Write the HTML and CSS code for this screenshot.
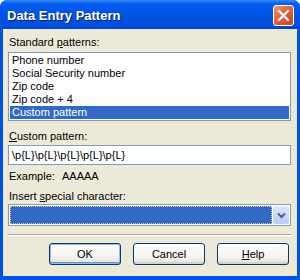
FILE: index.html
```html
<!DOCTYPE html>
<html lang="en">
<head>
    <meta charset="UTF-8">
    <title>Data Entry Pattern</title>
    <link rel="stylesheet" href="styles.css">
</head>
<body>
    <div class="window">
        <div class="titlebar">
            <span class="title">Data Entry Pattern</span>
            <button class="close" type="button">
                <svg width="13" height="13" viewBox="0 0 13 13">
                    <path d="M2 2 L11 11 M11 2 L2 11" stroke="#fff" stroke-width="2.2" stroke-linecap="square"/>
                </svg>
            </button>
        </div>
        <div class="content">
            <p class="label">Standard <u>p</u>atterns:</p>
            <ul class="list">
                <li>Phone number</li>
                <li>Social Security number</li>
                <li>Zip code</li>
                <li>Zip code + 4</li>
                <li class="selected">Custom pattern</li>
            </ul>

            <p class="label gap"><u>C</u>ustom pattern:</p>
            <div class="textbox">\p{L}\p{L}\p{L}\p{L}\p{L}</div>

            <p class="example"><span class="example-key">Example:</span>AAAAA</p>

            <p class="label tight">Insert <u>s</u>pecial character:</p>
            <div class="combo">
                <div class="combo-value"></div>
                <div class="combo-button">
                    <svg width="9" height="7" viewBox="0 0 9 7">
                        <path d="M1 1.5 L4.5 5 L8 1.5" fill="none" stroke="#4d6185" stroke-width="2"/>
                    </svg>
                </div>
            </div>

            <div class="separator"></div>

            <div class="buttons">
                <button type="button" class="btn default">OK</button>
                <button type="button" class="btn">Cancel</button>
                <button type="button" class="btn"><u>H</u>elp</button>
            </div>
        </div>
    </div>
</body>
</html>
```

FILE: styles.css
```css
body {
    margin: 0;
    background-color: #ffffff;
    font-family: Tahoma, "Liberation Sans", Arial, sans-serif;
    font-size: 11px;
    color: #000000;
}

.window {
    width: 300px;
    height: 280px;
    box-sizing: border-box;
    background-color: #0054e3;
    border-radius: 7px 7px 0 0;
    display: flex;
    flex-direction: column;
    overflow: hidden;
}

/* Barra de titulo */
.titlebar {
    height: 29px;
    flex-shrink: 0;
    display: flex;
    align-items: center;
    justify-content: space-between;
    padding: 0 6px 0 7px;
    background: linear-gradient(#3c8cf8 0, #0a64f0 3px, #0058ee 6px, #0054e3 50%, #0050dc 85%, #0046cc 100%);
}

.title {
    color: #ffffff;
    font-family: "Trebuchet MS", "Liberation Sans", sans-serif;
    font-weight: bold;
    font-size: 13px;
    text-shadow: 1px 1px 0 #0a1e70;
    margin-top: 1px;
}

.close {
    width: 21px;
    height: 21px;
    padding: 0;
    margin-top: 1px;
    border: 1px solid #ffffff;
    border-radius: 3px;
    background: linear-gradient(135deg, #f09a7c 0, #e3623d 45%, #c7431c 100%);
    display: flex;
    align-items: center;
    justify-content: center;
}

/* Contenido */
.content {
    flex: 1;
    margin: 0 3px 4px 3px;
    padding: 7px 6px 0 5px;
    background-color: #ece9d8;
}

.label, .example {
    margin: 0 0 3px 1px;
    line-height: 13px;
}

.label.gap {
    margin-top: 9px;
    margin-bottom: 2px;
}

.label.tight {
    margin-bottom: 1px;
}

.list {
    list-style: none;
    margin: 0;
    padding: 1px;
    height: 65px;
    border: 1px solid #7f9db9;
    background-color: #ffffff;
    overflow: hidden;
}

.list li {
    height: 13px;
    line-height: 13px;
    padding-left: 2px;
}

.list li.selected {
    background-color: #316ac5;
    color: #ffffff;
}

.textbox {
    height: 18px;
    line-height: 18px;
    border: 1px solid #7f9db9;
    background-color: #ffffff;
    padding-left: 3px;
}

.example {
    margin-top: 5px;
    margin-bottom: 7px;
}

.example-key {
    display: inline-block;
    width: 53px;
}

.combo {
    height: 22px;
    box-sizing: border-box;
    border: 1px solid #7f9db9;
    background-color: #ffffff;
    padding: 1px;
    display: flex;
    gap: 1px;
}

.combo-value {
    flex: 1;
    background-color: #316ac5;
    outline: 1px dotted #e8c060;
    outline-offset: -1px;
}

.combo-button {
    width: 16px;
    border-radius: 2px;
    background: linear-gradient(#dce6fd, #b9cdf9);
    display: flex;
    align-items: center;
    justify-content: center;
}

.separator {
    margin-top: 8px;
    border-top: 1px solid #aca899;
    border-bottom: 1px solid #ffffff;
}

/* Botones */
.buttons {
    display: flex;
    justify-content: flex-end;
    gap: 12px;
    margin: 7px 2px 0 0;
}

.btn {
    width: 72px;
    height: 22px;
    padding: 0;
    font-family: inherit;
    font-size: 11px;
    color: #000000;
    border: 1px solid #003c74;
    border-radius: 3px;
    background: linear-gradient(#ffffff 0, #f5f4f0 60%, #e3e2da 100%);
    box-shadow: inset 0 -2px 0 #d6d0c5;
}

.btn.default {
    box-shadow: inset 0 0 0 1px #97b8f0, inset 0 -2px 0 #6b8fd8;
}
```
